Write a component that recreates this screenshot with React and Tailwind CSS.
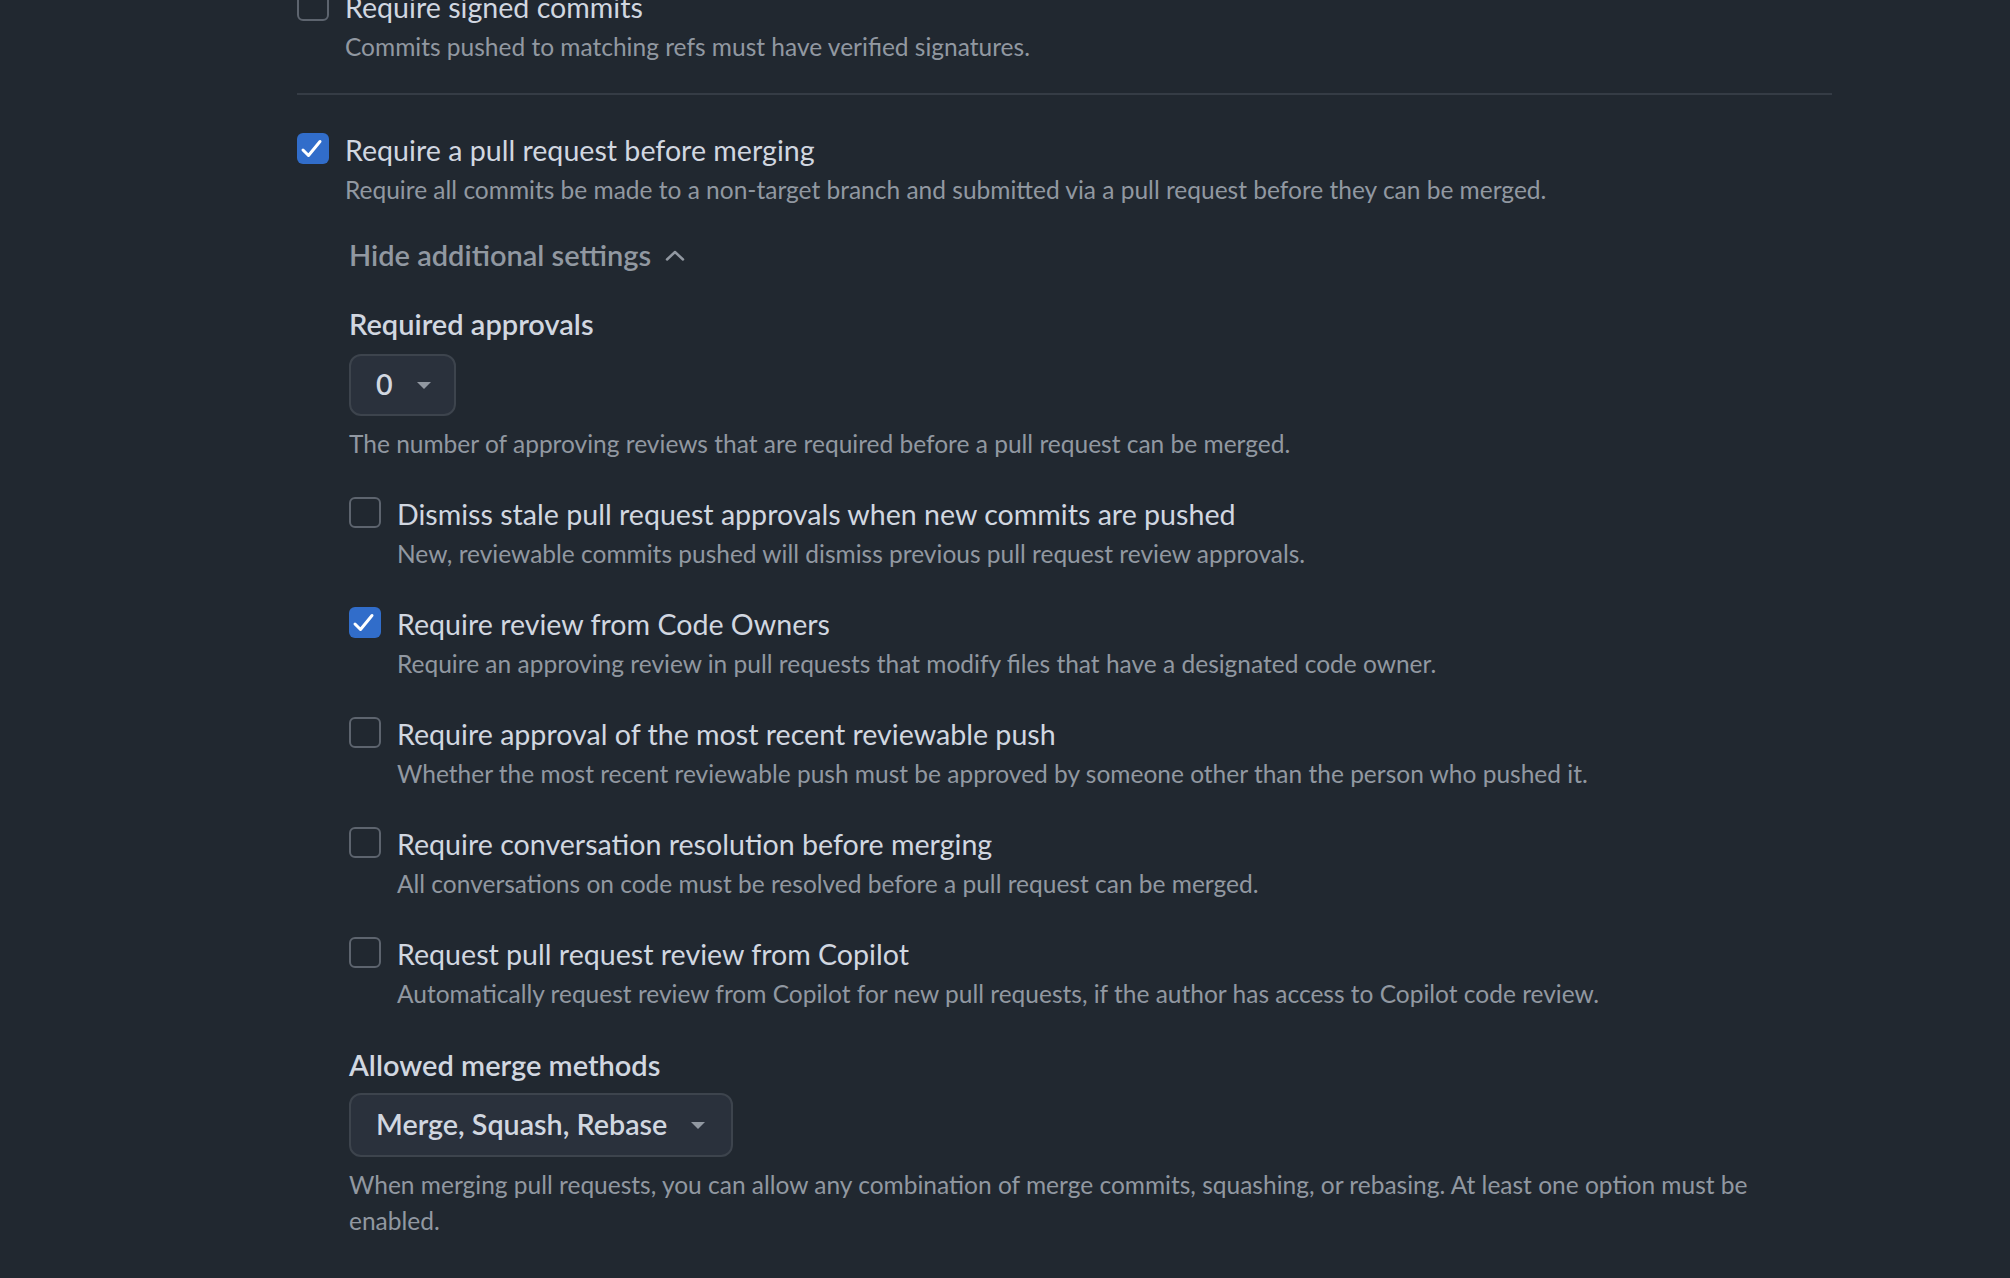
import React from "react";

function Checkbox({ checked }) {
  if (checked) {
    return (
      <span className="mt-[3px] flex h-[31px] w-[32px] shrink-0 items-center justify-center rounded-[6px] bg-[#316dca]">
        <svg viewBox="0 0 32 31" className="h-[31px] w-[32px]" fill="none" stroke="white" strokeWidth="3" strokeLinecap="round" strokeLinejoin="round">
          <path d="M6 17l5.5 5.5L23 8.5" />
        </svg>
      </span>
    );
  }
  return <span className="mt-[3px] h-[31px] w-[32px] shrink-0 rounded-[6px] border-2 border-[#5d646e]" />;
}

function Option({ checked, title, desc, className = "" }) {
  return (
    <div className={`flex gap-[16px] ${className}`}>
      <Checkbox checked={checked} />
      <div>
        <div className="text-[28.6px] leading-[40px] text-[#d1d7e0]">{title}</div>
        <div className="mt-[2px] text-[24.5px] leading-[36px] text-[#9198a1]">{desc}</div>
      </div>
    </div>
  );
}

function Caret() {
  return (
    <svg viewBox="0 0 14 7" className="h-[7px] w-[14px]" fill="#9198a1">
      <path d="M0 0h14L7 7z" />
    </svg>
  );
}

export default function App() {
  return (
    <div className="min-h-screen overflow-hidden bg-[#212830] font-['Segoe_UI',Lato,'Noto_Sans',sans-serif]">
      <div className="-mt-[13px] ml-[297px] w-[1535px]">
        <Option
          title="Require signed commits"
          desc="Commits pushed to matching refs must have verified signatures."
        />

        <div className="mt-[28px] h-[2px] bg-[#353c45]" />

        <Option
          checked
          className="mt-[35px]"
          title="Require a pull request before merging"
          desc="Require all commits be made to a non-target branch and submitted via a pull request before they can be merged."
        />

        {/* additional settings */}
        <div className="pl-[52px]">
          <button className="mt-[27px] flex items-center gap-[14px] text-[29px] font-semibold leading-[40px] text-[#9198a1]">
            Hide additional settings
            <svg viewBox="0 0 20 11" className="h-[11px] w-[20px]" fill="none" stroke="#9198a1" strokeWidth="2.5" strokeLinecap="round" strokeLinejoin="round">
              <path d="M2 9.5L10 2l8 7.5" />
            </svg>
          </button>

          <div className="mt-[29px] text-[29px] font-semibold leading-[40px] text-[#d1d7e0]">Required approvals</div>
          <button className="mt-[10px] flex h-[62px] w-[107px] items-center gap-[24px] rounded-[12px] border-2 border-[#3d444d] bg-[#2a313c] pl-[25px] text-[28.7px] font-semibold text-[#d1d7e0]">
            0
            <Caret />
          </button>
          <div className="mt-[10px] text-[24.5px] leading-[36px] text-[#9198a1]">
            The number of approving reviews that are required before a pull request can be merged.
          </div>

          <Option
            className="mt-[32px]"
            title="Dismiss stale pull request approvals when new commits are pushed"
            desc="New, reviewable commits pushed will dismiss previous pull request review approvals."
          />
          <Option
            checked
            className="mt-[32px]"
            title="Require review from Code Owners"
            desc="Require an approving review in pull requests that modify files that have a designated code owner."
          />
          <Option
            className="mt-[32px]"
            title="Require approval of the most recent reviewable push"
            desc="Whether the most recent reviewable push must be approved by someone other than the person who pushed it."
          />
          <Option
            className="mt-[32px]"
            title="Require conversation resolution before merging"
            desc="All conversations on code must be resolved before a pull request can be merged."
          />
          <Option
            className="mt-[32px]"
            title="Request pull request review from Copilot"
            desc="Automatically request review from Copilot for new pull requests, if the author has access to Copilot code review."
          />

          <div className="mt-[33px] text-[29px] font-semibold leading-[40px] text-[#d1d7e0]">Allowed merge methods</div>
          <button className="mt-[8px] flex h-[64px] w-[384px] items-center gap-[24px] rounded-[12px] border-2 border-[#3d444d] bg-[#2a313c] pl-[25px] text-[28.7px] font-semibold text-[#d1d7e0]">
            Merge, Squash, Rebase
            <Caret />
          </button>
          <div className="mt-[10px] text-[24.5px] leading-[36px] text-[#9198a1]">
            When merging pull requests, you can allow any combination of merge commits, squashing, or rebasing. At least one option must be enabled.
          </div>
        </div>
      </div>
    </div>
  );
}
